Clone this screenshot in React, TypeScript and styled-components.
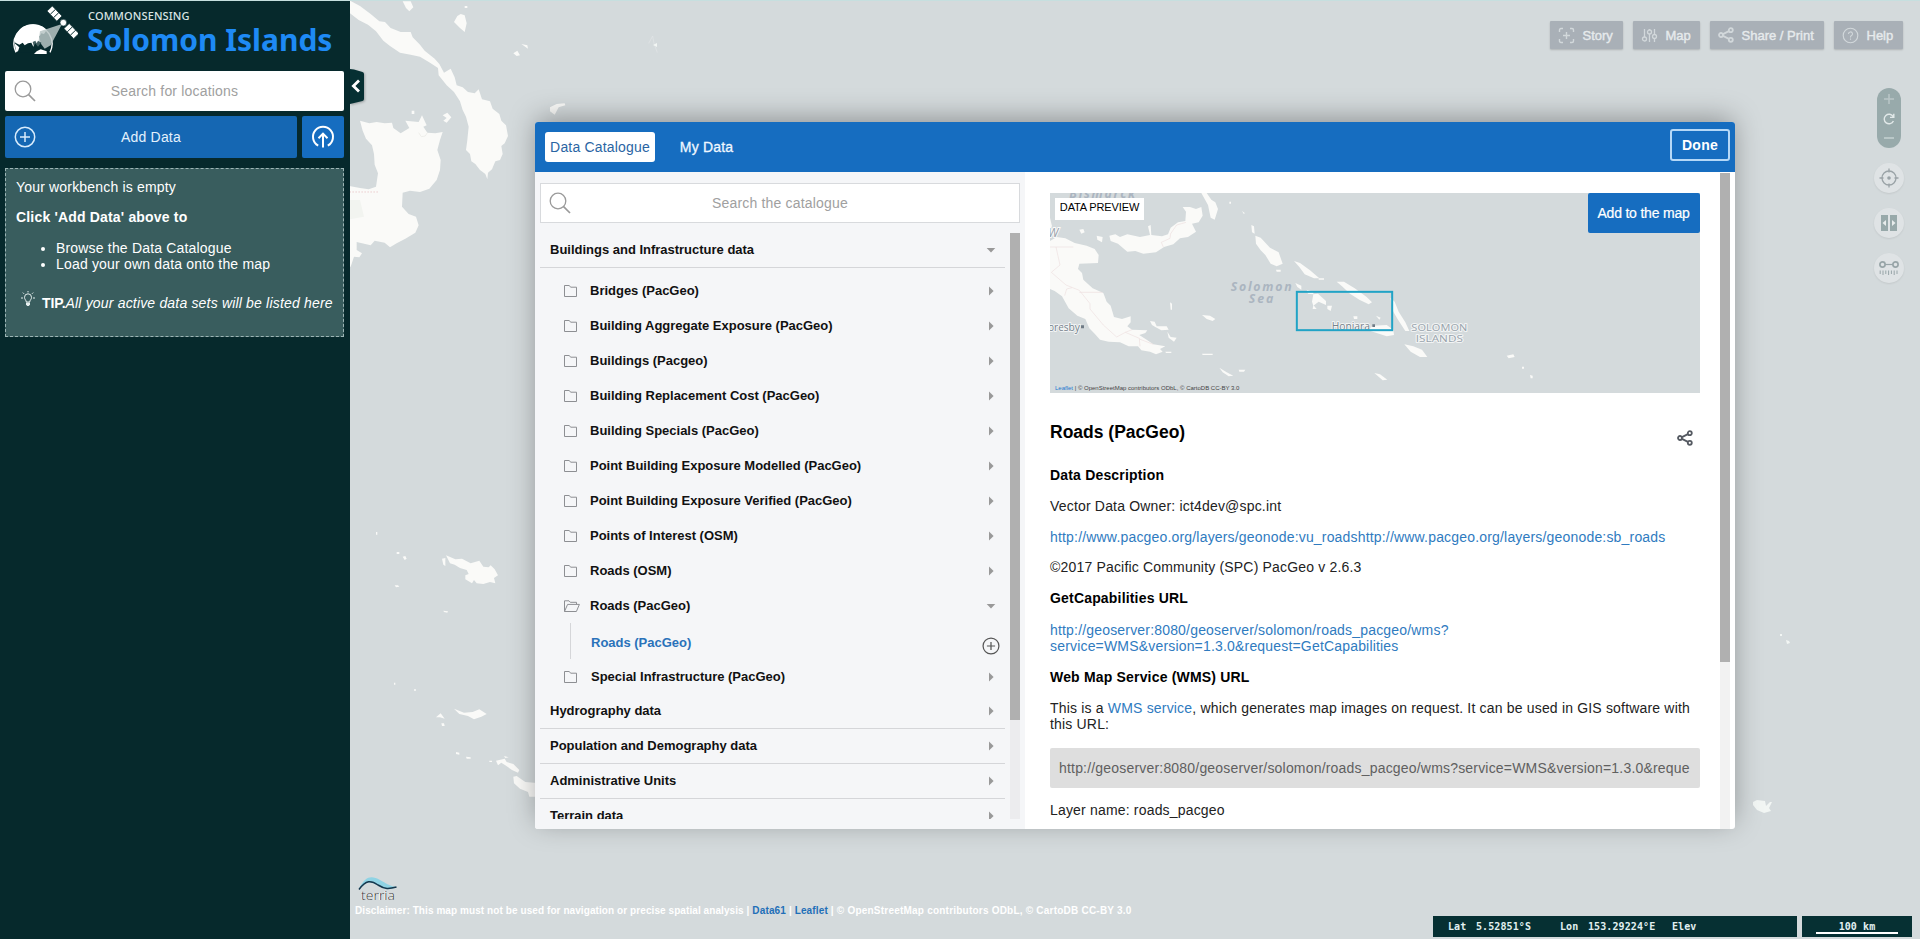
import React from 'react';
import styled, { createGlobalStyle, css } from 'styled-components';

const sans = '"Liberation Sans", Arial, sans-serif';
const blue = '#166dc0';

const GlobalStyle = createGlobalStyle`
  * { box-sizing: border-box; }
  html, body { margin: 0; padding: 0; }
  body { font-family: ${sans}; font-size: 14px; letter-spacing: 0.18px; line-height: 16px; color: #000; overflow: hidden; }
  p, ul, h3, h4 { margin: 0; }
  a { color: #2f7bbf; text-decoration: none; }
  button { font-family: inherit; letter-spacing: inherit; border: 0; margin: 0; cursor: pointer; }
`;

const Page = styled.div`
  position: relative;
  display: flex;
  width: 100%;
  height: 939px;
  background: #d4dadc;
  border-top: 1px solid #c6dfdf;
  overflow: hidden;
`;

/* ---------- sidebar ---------- */

const Sidebar = styled.aside`
  position: relative;
  display: flex;
  flex-direction: column;
  width: 350px;
  height: 100%;
  padding: 0 6px 0 5px;
  background: #06292c;
  color: #fff;
`;

const Brand = styled.header`
  display: flex;
  height: 70px;
  padding: 5px 0 0 7px;
  gap: 10px;
`;

const BrandText = styled.div`
  display: flex;
  flex-direction: column;
  font-family: "Noto Sans", "Open Sans", sans-serif;
  padding-top: 2px;
`;

const BrandOver = styled.span`
  font-size: 11px;
  font-weight: 500;
  letter-spacing: 0.12px;
  line-height: 16px;
  color: #d9e4e4;
`;

const BrandName = styled.span`
  font-size: 30px;
  font-weight: 700;
  letter-spacing: 0;
  line-height: 34px;
  margin-top: -1px;
  margin-left: -1px;
  color: #1e8af5;
`;

const SearchField = styled.div<{ $bordered?: boolean }>`
  display: flex;
  align-items: center;
  flex: none;
  height: 40px;
  padding: 0 9px;
  background: #fff;
  border-radius: 2px;
  ${p => p.$bordered && css`border: 1px solid #d8dadd; border-radius: 0; padding: 0 8px;`}
`;

const Placeholder = styled.span`
  flex: 1;
  padding-right: 22px;
  text-align: center;
  color: #a0a0a0;
`;

const ActionRow = styled.div`
  display: flex;
  gap: 5px;
  margin-top: 5px;
`;

const AddButton = styled.button`
  display: flex;
  align-items: center;
  width: 292px;
  height: 42px;
  padding: 0 9px;
  background: #1567b3;
  border-radius: 2px;
  color: #e3f1fd;
  font-size: 14px;
  span { flex: 1; text-align: center; padding-right: 22px; }
`;

const UploadButton = styled.button`
  display: flex;
  align-items: center;
  justify-content: center;
  width: 42px;
  height: 42px;
  padding: 0;
  background: ${blue};
  border-radius: 2px;
`;

const Workbench = styled.section`
  margin-top: 10px;
  height: 169px;
  padding: 10px;
  background: #395d5e;
  border: 1px dashed #9db5b5;
`;

const EmptyTitle = styled.p`margin-bottom: 14px;`;
const EmptyLead = styled(EmptyTitle)`font-weight: 700; margin-bottom: 15px;`;
const Steps = styled.ul`padding-left: 40px; line-height: 16px;`;
const Tip = styled.p`
  display: flex;
  align-items: center;
  margin-top: 23px;
  white-space: nowrap;
  svg { margin: -8px 6px 0 4px; }
  strong { letter-spacing: -0.1px; }
`;

const Collapse = styled.button`
  position: absolute;
  left: 350px;
  top: 68px;
  width: 14px;
  height: 35px;
  padding: 0;
  background: none;
  filter: drop-shadow(1px 1px 1px rgba(0,0,0,.25));
  svg { display: block; }
`;

/* ---------- map ---------- */

const MapArea = styled.main`
  position: relative;
  display: flex;
  flex: 1;
  flex-direction: column;
`;

const LandLayer = styled.svg`
  position: absolute;
  left: 0;
  top: -1px;
`;

const Toolbar = styled.nav`
  display: flex;
  justify-content: flex-end;
  gap: 10px;
  padding: 20px 17px 0 0;
`;

const ToolButton = styled.button<{ $w: number }>`
  display: flex;
  align-items: center;
  width: ${p => p.$w}px;
  height: 28px;
  padding: 0 0 0 8px;
  gap: 7.5px;
  background: #a9b0b7;
  border-radius: 1px;
  box-shadow: 0 1px 2px rgba(0,0,0,.18);
  color: #e6eaec;
  font-size: 13px;
  letter-spacing: 0;
  -webkit-text-stroke: 0.4px #e6eaec;
  white-space: nowrap;
`;

const NavColumn = styled.div`
  display: flex;
  flex-direction: column;
  align-items: center;
  align-self: flex-end;
  width: 30px;
  margin: 39px 16px 0 0;
`;

const ZoomPill = styled.div`
  display: flex;
  flex-direction: column;
  align-items: center;
  justify-content: space-between;
  width: 24px;
  height: 60px;
  padding: 6px 0 5px;
  margin-bottom: 15px;
  background: #98aaab;
  border-radius: 12px;
`;

const RoundTool = styled.div`
  display: flex;
  align-items: center;
  justify-content: center;
  width: 30px;
  height: 30px;
  margin-bottom: 15px;
  background: #dfe3e5;
  border-radius: 50%;
  box-shadow: 0 1px 2px rgba(0,0,0,.08);
`;

const MapFooter = styled.footer`
  display: flex;
  justify-content: space-between;
  margin-top: auto;
  height: 62px;
`;

const Credits = styled.div`
  padding-left: 5px;
  color: #fff;
  font-size: 10px;
  font-weight: 700;
  letter-spacing: 0.08px;
  line-height: 12px;
  white-space: nowrap;
  a { color: #1f6fb8; letter-spacing: 0.15px; }
  svg { display: block; margin: 0 0 1px 3px; }
`;

const Attribution = styled.span`letter-spacing: 0.22px;`;

const Readouts = styled.div`
  display: flex;
  align-items: flex-start;
  gap: 5px;
  padding: 39px 8px 0 0;
  font-family: "DejaVu Sans Mono", "Liberation Mono", monospace;
  font-size: 10px;
  font-weight: 700;
  letter-spacing: 0.1px;
  line-height: 21px;
  color: #e2f1f1;
`;

const Coordinates = styled.div`
  display: flex;
  width: 364px;
  height: 21px;
  padding-left: 15px;
  background: #063033;
  white-space: pre;
`;

const Reading = styled.span<{ $w: number }>`width: ${p => p.$w}px;`;

const Scale = styled.div`
  width: 110px;
  height: 21px;
  background: #063033;
  text-align: center;
  &::after { content: ""; display: block; width: 82px; height: 2px; margin: -5px auto 0 14px; background: #fff; }
`;

/* ---------- catalogue window ---------- */

const Dialog = styled.div`
  position: absolute;
  left: 535px;
  top: 121px;
  display: flex;
  flex-direction: column;
  width: 1200px;
  height: 707px;
  background: #fff;
  border-radius: 3px;
  box-shadow: 0 -5px 28px -2px rgba(0,0,0,.34);
  overflow: hidden;
`;

const DialogHeader = styled.div`
  display: flex;
  align-items: center;
  flex: none;
  height: 50px;
  padding: 0 5px 0 10px;
  background: ${blue};
`;

const Tab = styled.button<{ $active?: boolean }>`
  height: 30px;
  padding: 0;
  width: ${p => (p.$active ? 110 : 103)}px;
  border-radius: 3px;
  background: ${p => (p.$active ? '#fff' : 'transparent')};
  color: ${p => (p.$active ? '#2a65a3' : '#eef7ff')};
  font-size: 14px;
  -webkit-text-stroke: ${p => (p.$active ? '0' : '0.3px #eef7ff')};
`;

const DoneButton = styled.button`
  width: 60px;
  height: 32px;
  margin: -5px 0 0 auto;
  padding: 0;
  background: transparent;
  border: 2px solid #b5d8f7;
  border-radius: 3px;
  color: #fff;
  font-size: 14px;
  font-weight: 700;
  letter-spacing: 0.3px;
`;

const DialogBody = styled.div`
  display: flex;
  flex: 1;
  min-height: 0;
`;

const CataloguePane = styled.div`
  display: flex;
  flex-direction: column;
  width: 490px;
  padding: 11px 5px 10px;
  background: #f5f6f8;
`;

const ListViewport = styled.div`
  display: flex;
  justify-content: space-between;
  flex: 1;
  min-height: 0;
  margin-top: 10px;
  overflow: hidden;
`;

const Tree = styled.div`
  width: 465px;
  font-size: 13px;
  font-weight: 700;
  letter-spacing: -0.01px;
  color: #111;
`;

const GroupRow = styled.div`
  display: flex;
  align-items: center;
  justify-content: space-between;
  height: 35px;
  padding: 0 9px 0 10px;
  border-bottom: 1px solid #d5d6d9;
`;

const Children = styled.div`padding: 5px 0 0;`;

const FolderRow = styled.div<{ $shift?: boolean }>`
  display: flex;
  align-items: center;
  height: 35px;
  padding: 0 9px 0 23px;
  span { flex: 1; padding-left: ${p => (p.$shift ? 11 : 10)}px; }
`;

const LeafRow = styled.div`
  display: flex;
  align-items: center;
  height: 36px;
  margin-left: 30px;
  padding: 4px 5px 0 20px;
  border-left: 1px solid #d5d6d9;
  color: #2a72ba;
  span { flex: 1; }
  svg { margin-top: 6px; }
`;

const Track = styled.div<{ $bg: string; $thumb: number }>`
  flex: none;
  width: 10px;
  background: ${p => p.$bg};
  &::before { content: ""; display: block; height: ${p => p.$thumb}px; background: #b0b0b0; }
`;

const DetailPane = styled.div`
  display: flex;
  flex: 1;
  justify-content: space-between;
  padding: 1px 5px 0 25px;
`;

const Details = styled.article`
  width: 650px;
  padding-top: 20px;
  color: #222;
`;

const Preview = styled.div`
  position: relative;
  height: 200px;
  background: #d4dadc;
  overflow: hidden;
  & > svg { display: block; }
`;

const PreviewTag = styled.span`
  position: absolute;
  left: 5px;
  top: 5px;
  width: 89px;
  height: 22px;
  background: #fff;
  font-size: 11px;
  letter-spacing: -0.13px;
  line-height: 18px;
  text-align: center;
  color: #000;
`;

const AddToMap = styled.button`
  position: absolute;
  right: 0;
  top: 0;
  width: 112px;
  height: 40px;
  padding: 0 1px 1px 0;
  background: ${blue};
  border-radius: 2px;
  color: #fff;
  font-size: 14px;
  letter-spacing: -0.2px;
  -webkit-text-stroke: 0.2px #fff;
`;

const PreviewCredit = styled.div`
  position: absolute;
  left: 5px;
  bottom: 1px;
  font-size: 6px;
  letter-spacing: 0;
  line-height: 8px;
  color: #444;
  a { color: #1f78d0; }
`;

const TitleRow = styled.div`
  display: flex;
  justify-content: space-between;
  align-items: flex-start;
  height: 74px;
  padding: 29px 7px 0 0;
  svg { margin-top: 8px; }
`;

const Title = styled.h3`
  font-size: 17.5px;
  line-height: 20px;
  letter-spacing: 0;
  color: #000;
`;

const Heading = styled.h4`
  font-size: 14px;
  line-height: 16px;
  margin-bottom: 14.8px;
  color: #000;
`;

const CapabilitiesHeading = styled(Heading)`margin-bottom: 16px;`;

const Para = styled.p`margin-bottom: 14.8px;`;

const UrlBox = styled.div`
  height: 40px;
  margin: 16px 0 14px;
  padding: 0 9px;
  background: #dedede;
  border-radius: 2px;
  letter-spacing: 0.19px;
  line-height: 40px;
  color: #606060;
  white-space: nowrap;
  overflow: hidden;
`;

/* ---------- icons ---------- */

const Magnifier = () => (
  <svg width="22" height="22" viewBox="0 0 22 22" fill="none" stroke="#9a9a9a" strokeWidth="1.3">
    <circle cx="9" cy="9" r="7.8" />
    <path d="M14.6 14.6 L21 21" strokeWidth="1.7" />
  </svg>
);

const PlusCircle = ({ size, color }: { size: number; color: string }) => (
  <svg width={size} height={size} viewBox="0 0 22 22" fill="none" stroke={color} strokeWidth="1.5">
    <circle cx="11" cy="11" r="9.7" />
    <path d="M11 6 V16 M6 11 H16" />
  </svg>
);

const Caret = ({ open }: { open?: boolean }) => (
  <svg width="10" height="10" viewBox="0 0 10 10" fill="#999">
    {open ? <path d="M0.7 3 H9.3 L5 7.4 Z" /> : <path d="M3 0.6 V9.4 L7.6 5 Z" />}
  </svg>
);

const Folder = ({ open }: { open?: boolean }) => (
  <svg width="17" height="14" viewBox="0 0 17 14" fill="none" stroke="#8d8f93" strokeWidth="1">
    {open ? (
      <path d="M1.5 12.5 V1.8 H6 L7.3 3.3 H13.5 V5.3 M1.5 12.5 L4.6 5.4 H16.4 L13.4 12.5 Z" />
    ) : (
      <path d="M1.5 12.5 V1.5 H6.3 L7.6 3.2 H13.5 V12.5 Z" />
    )}
  </svg>
);

const ShareGlyph = ({ color, size }: { color: string; size: number }) => (
  <svg width={size} height={size} viewBox="0 0 16 16" fill="none" stroke={color} strokeWidth="1.8">
    <circle cx="3" cy="8" r="2" />
    <circle cx="12.8" cy="3.2" r="2" />
    <circle cx="12.8" cy="12.8" r="2" />
    <path d="M5 7.1 L10.9 4.1 M5 8.9 L10.9 11.9" />
  </svg>
);

const EarthLogo = () => (
  <svg width="66" height="52" viewBox="0 0 198 156">
    <path d="M12 139 A57 57 0 1 1 114 139" fill="#06292c" stroke="#fff" strokeWidth="4" />
    <path d="M7 104 A57 57 0 0 1 104 72 L96 84 L88 82 L82 92 L86 112 L78 122 L70 112 L64 122 L58 110 L48 112 L38 118 L32 110 L22 116 L10 110 Z" fill="#fff" />
    <path d="M74 136 L86 130 L104 136 L104 144 L66 144 Z" fill="#fff" />
    <path d="M8 112 L22 124 L18 136 L12 138 Z" fill="#fff" />
    <path d="M150 54 L84 76 L80 104 L98 128 L116 118 Z" fill="#b9c5c5" opacity="0.85" />
    <path d="M62 108 l8 -4 4 8 4 -8 10 6 -4 14 -10 4 -8 -6 Z" fill="#06292c" opacity="0.75" />
    <g fill="#fff" stroke="#06292c" strokeWidth="2">
      <g transform="translate(154 50) rotate(46)">
        <rect x="-59" y="-11" width="14" height="22" />
        <rect x="-45" y="-11" width="14" height="22" />
        <rect x="-31" y="-11" width="14" height="22" />
        <rect x="14" y="-11" width="14" height="22" />
        <rect x="28" y="-11" width="14" height="22" />
        <rect x="42" y="-11" width="14" height="22" />
      </g>
      <circle cx="154" cy="50" r="10" />
    </g>
  </svg>
);

const Bulb = () => (
  <svg width="16" height="16" viewBox="0 0 16 16" fill="none" stroke="#e6efef" strokeWidth="1">
    <path d="M6.3 11 C6.3 9.2 4.5 8.6 4.5 6.3 A3.5 3.5 0 0 1 11.5 6.3 C11.5 8.6 9.7 9.2 9.7 11 Z M1 7 H3 M13 7 H15 M2.8 1.6 L4 2.8 M13.2 1.6 L12 2.8 M8 0 V1.4" />
    <path d="M6 11.5 H10 V13.5 L8.8 15 H7.2 L6 13.5 Z" fill="#e6efef" stroke="none" />
  </svg>
);

const StoryGlyph = () => (
  <svg width="17" height="17" viewBox="0 0 17 17" fill="none" stroke="#d2d8db" strokeWidth="1.4">
    <path d="M1.5 5 V3 Q1.5 1.5 3 1.5 H5 M12 1.5 H14 Q15.5 1.5 15.5 3 V5 M15.5 12 V14 Q15.5 15.5 14 15.5 H12 M5 15.5 H3 Q1.5 15.5 1.5 14 V12 M8.5 5 V12 M5 8.5 H12" />
  </svg>
);

const SlidersGlyph = () => (
  <svg width="17" height="15" viewBox="0 0 17 15" fill="none" stroke="#d2d8db" strokeWidth="1.3">
    <path d="M3.5 1 V9 M8.5 6 V14 M13.5 1 V6.5 M13.5 10.5 V14 M8.5 1 V2" />
    <circle cx="3.5" cy="11" r="2" />
    <circle cx="8.5" cy="4" r="2" />
    <circle cx="13.5" cy="8.5" r="2" />
  </svg>
);

const HelpGlyph = () => (
  <svg width="17" height="17" viewBox="0 0 17 17" fill="none" stroke="#d2d8db" strokeWidth="1.1">
    <circle cx="8.5" cy="8.5" r="7.3" />
    <path d="M6.5 7 A2 2 0 1 1 9.2 8.8 Q8.5 9.2 8.5 10.4 M8.5 11.6 V12.8" />
  </svg>
);

const TerriaLogo = () => (
  <svg width="42" height="27" viewBox="0 0 42 27">
    <path d="M1 11.5 C8 -2 14 -1 22 3 C28 6 32 9.5 38.5 10 C31 14 26 12 21 9 C13 4 8 4 1 11.5Z" fill="#8fd3e4" />
    <path d="M1 12.5 C8 3 13 3 20 8 C27 12.5 31 12 38.5 10" fill="none" stroke="#15374d" strokeWidth="1.5" />
    <text x="2.4" y="23.4" fontFamily='"Open Sans", sans-serif' fontSize="12.5" fontWeight="400" fill="#fff" textLength="34" lengthAdjust="spacingAndGlyphs">terria</text>
    <text x="3" y="23" fontFamily='"Open Sans", sans-serif' fontSize="12.5" fontWeight="300" fill="#333" textLength="34" lengthAdjust="spacingAndGlyphs">terria</text>
  </svg>
);

/* ---------- map drawings ---------- */

const Land = () => (
  <LandLayer width="1920" height="939" viewBox="0 0 1920 939" fill="#fafaf8">
    <g transform="translate(340 0) scale(0.33333)">
      <path d="M30 2 L60 18 L92 42 L118 64 L135 66 L152 84 L182 96 L212 96 L218 112 L240 134 L254 152 L284 176 L298 192 L312 218 L332 206 L344 232 L350 256 L368 262 L384 276 L404 280 L416 268 L426 298 L450 304 L458 326 L478 342 L484 362 L498 376 L504 408 L494 430 L484 438 L488 462 L480 480 L466 484 L456 508 L444 518 L442 538 L436 522 L420 510 L406 492 L394 484 L390 462 L378 450 L382 420 L386 380 L378 350 L368 330 L360 304 L342 276 L320 256 L296 226 L294 204 L270 188 L240 170 L212 164 L180 158 L150 138 L130 122 L108 94 L84 74 L56 60 L30 40 Z" />
      <path d="M60 362 L88 370 L110 366 L134 370 L156 368 L160 384 L182 400 L208 384 L196 362 L236 366 L246 346 L260 376 L250 380 L262 398 L286 400 L308 396 L300 420 L292 450 L302 480 L300 510 L290 540 L268 566 L240 576 L210 572 L188 578 L186 620 L206 642 L228 650 L236 676 L226 698 L196 716 L170 730 L150 742 L134 728 L104 722 L92 736 L50 726 L50 750 L66 760 L58 772 L42 770 L32 800 L28 800 L28 558 L60 564 L86 568 L108 560 L114 520 L104 494 L102 462 L96 436 L78 416 L68 392 Z" />
      <path d="M188 4 L212 4 L220 22 L208 34 L198 24 Z M362 42 L374 46 L380 70 L374 96 L360 84 L342 66 L352 48 Z M520 160 L532 152 L540 166 L530 168 Z M544 132 L562 136 L564 146 Z M374 18 l8 0 0 6 -8 0Z M630 322 L650 312 L674 310 L676 316 L656 322 L644 344 L630 334 Z M308 346 L322 338 L334 352 L320 368 L310 362 L320 354 Z M215 332 h8 v10 h-8Z" />
      <path d="M262 398 L256 408 L244 410 L236 398" fill="none" stroke="#e8e8e4" strokeWidth="2" />
      <path d="M28 576 H118" stroke="#e9bcc0" strokeWidth="2" strokeDasharray="5 4" fill="none" />
      <path d="M30 600 L60 600 L72 650 L30 658 Z" fill="#f2f4f0" />
      <path d="M926 130 L938 108 L942 130 L952 158" fill="none" stroke="#e2e6e7" strokeWidth="2" />
    </g>
    <g transform="translate(340 500) scale(0.33333)">
      <path d="M306 176 L316 174 L316 198 L310 194 Z M318 166 L346 178 L366 176 L392 190 L418 182 L430 200 L446 202 L452 196 L464 208 L474 226 L462 234 L466 250 L450 246 L430 252 L410 250 L402 240 L396 250 L376 238 L376 226 L386 222 L380 210 L360 204 L344 194 L330 190 Z" />
      <path d="M342 626 L372 638 L398 636 L418 628 L440 642 L424 650 L402 658 L384 648 L358 642 Z M288 652 L302 640 L314 656 L300 652 Z M468 782 L494 776 L500 786 L520 792 L538 810 L534 818 L516 810 L496 796 L484 788 L474 796 Z M520 830 L530 828 L556 846 L600 850 L600 890 L568 890 L564 876 L540 866 L522 850 Z" />
      <path d="M188 170 l8 -2 4 8 -6 4Z M170 156 l8 0 0 6 -8 0Z M164 256 l10 0 4 4 -10 2Z M310 332 l14 2 -2 4 -10 -2Z M348 756 l10 2 0 6 -10 -2Z M378 770 l14 2 0 4 -12 0Z M304 670 l8 0 2 8 -8 0Z M492 768 l14 4 -10 2Z M448 782 h8 v4 h-8Z M108 96 h4 v8 h-4Z M222 568 h6 v4 h-6Z M162 548 h4 v6 h-4Z" />
    </g>
    <path d="M1753 802 L1757 800 L1765 801 L1766 806 L1770 802 L1772 802 L1769 808 L1771 811 L1764 813 L1757 810 L1753 805 Z M1786 640 l3 1 1 2 -3 1Z M1780 634 h2 v2 h-2Z M653 45 l4 -2 0 4Z" fill="#f2f6f4" />
  </LandLayer>
);

const labelFont = '"Open Sans", sans-serif';

const PreviewMap = () => (
  <svg width="650" height="200" viewBox="30 24 1950 600" fill="#fafaf8">
    <path d="M30 98 L36 124 L30 130 Z M30 168 L50 156 L76 160 L104 174 L140 182 L164 192 L176 210 L174 234 L118 236 L114 252 L126 264 L130 284 L158 310 L190 324 L200 350 L212 362 L222 396 L246 402 L272 394 L272 412 L262 424 L276 434 L322 436 L316 444 L298 450 L320 464 L340 478 L376 484 L360 492 L368 500 L348 508 L330 500 L304 496 L294 484 L266 484 L240 472 L206 470 L180 464 L164 446 L148 430 L136 402 L112 392 L86 370 L66 334 L44 318 L30 312 Z" />
    <path d="M208 152 L226 148 L240 156 L262 148 L300 156 L330 150 L324 124 L332 120 L334 150 L366 154 L384 148 L392 128 L414 112 L436 108 L438 80 L428 66 L450 66 L468 72 L484 66 L488 92 L476 112 L456 116 L468 140 L444 156 L420 160 L400 178 L372 186 L348 202 L310 206 L286 198 L262 200 L234 176 L212 168 Z" />
    <path d="M484 24 L500 24 L514 44 L526 52 L534 72 L524 104 L512 98 L504 60 Z M118 134 L130 132 L134 142 L124 146 Z M170 152 L188 156 L186 172 L172 164 Z M634 120 L642 124 L644 146 L636 142 Z M646 152 L662 158 L690 188 L716 202 L728 236 L710 244 L692 236 L676 210 L662 196 L648 176 Z M708 254 h14 v6 h-12Z M762 228 L780 234 L810 256 L838 280 L822 280 L794 268 L778 246 Z" />
    <path d="M766 294 L784 302 L784 314 L772 306 Z M800 314 L820 320 L820 328 L804 326 Z M820 328 L834 326 L858 348 L858 360 L836 350 L820 362 L816 350 Z M820 360 L830 372 L818 372 Z M862 362 L876 362 L872 378 L862 372 Z M890 290 L912 290 L944 310 L980 336 L996 352 L986 358 L958 344 L930 326 L906 304 Z M836 280 h16 v4 h-16Z" />
    <path d="M1051 338 L1064 350 L1076 380 L1096 412 L1108 438 L1096 438 L1074 404 L1060 380 Z M984 436 L998 422 L1040 420 L1060 434 L1062 450 L1040 454 L1010 444 Z M1093 478 L1120 484 L1146 494 L1162 516 L1140 516 L1112 500 Z M1003 564 L1020 568 L1042 584 L1028 586 Z M1400 512 L1420 508 L1424 516 L1406 520 Z M1446 545 h6 v6 h-6Z M1470 570 l8 2 0 8 -6 0Z M1008 392 l14 6 -4 6Z M940 394 h12 v8 h-10Z" />
    <path d="M330 408 L344 410 L350 424 L380 424 L386 434 L364 436 L346 426 L336 420 Z M382 440 L392 456 L410 458 L402 470 L386 458 Z M486 390 L510 392 L526 402 L518 408 L500 402 Z M390 352 l6 4 0 18 -4 0Z M538 548 L560 562 L580 572 L566 574 L548 562 Z M596 554 h20 l-4 6 h-14Z M486 506 h32 v4 h-30Z M376 500 h18 v4 h-16Z M606 78 l8 6 -2 4Z M568 50 h5 v6 h-5Z" />
    <g fill="none" stroke="#ecdede" strokeWidth="1.8">
      <path d="M30 186 H100 M48 186 L60 240 L34 262 L78 300 L118 316 L150 356 L150 372 L190 420 L230 456 L256 442 L298 460 L300 484 M74 332 L80 312 L96 308 M118 322 H188 M256 442 L276 434 M438 112 L410 120 L392 146 L390 160 L364 172 L370 186 M298 462 L340 478" />
    </g>
    <g fill="#abb5c0" fontFamily={labelFont} fontStyle="italic" fontWeight="700">
      <text x="88" y="38" fontSize="37" textLength="197">Bismarck</text>
      <text x="572" y="318" fontSize="37" textLength="183">Solomon</text>
      <text x="626" y="355" fontSize="37" textLength="74">Sea</text>
      <text x="24" y="155" fontSize="36" fill="#97a0a8" fontWeight="400" stroke="#fafafa" strokeWidth="6" paintOrder="stroke">W</text>
    </g>
    <g fontFamily={labelFont} fill="#77838d" stroke="#f2f4f4" strokeWidth="6" paintOrder="stroke" strokeLinejoin="round">
      <text x="24" y="437" fontSize="31" textLength="96">oresby</text>
      <text x="875" y="434" fontSize="31" textLength="115">Honiara</text>
      <text x="1114" y="438" fontSize="29" fill="#98a3ac" textLength="168" lengthAdjust="spacingAndGlyphs">SOLOMON</text>
      <text x="1127" y="470" fontSize="29" fill="#98a3ac" textLength="142" lengthAdjust="spacingAndGlyphs">ISLANDS</text>
    </g>
    <path d="M123 421 h9 v9 h-9Z M997 418 h8 v8 h-8Z" fill="#6f7b85" />
    <rect x="770.5" y="320.5" width="286" height="115" fill="none" stroke="#21a3c6" strokeWidth="6" />
  </svg>
);

/* ---------- content ---------- */

const folders = [
  'Bridges (PacGeo)',
  'Building Aggregate Exposure (PacGeo)',
  'Buildings (Pacgeo)',
  'Building Replacement Cost (PacGeo)',
  'Building Specials (PacGeo)',
  'Point Building Exposure Modelled (PacGeo)',
  'Point Building Exposure Verified (PacGeo)',
  'Points of Interest (OSM)',
  'Roads (OSM)',
];

const groups = ['Hydrography data', 'Population and Demography data', 'Administrative Units', 'Terrain data'];

export default function App() {
  return (
    <Page>
      <GlobalStyle />
      <Land />
      <Sidebar>
        <Brand>
          <EarthLogo />
          <BrandText>
            <BrandOver>COMMONSENSING</BrandOver>
            <BrandName>Solomon Islands</BrandName>
          </BrandText>
        </Brand>
        <SearchField>
          <Magnifier />
          <Placeholder>Search for locations</Placeholder>
        </SearchField>
        <ActionRow>
          <AddButton>
            <PlusCircle size={22} color="#d9ecfc" />
            <span>Add Data</span>
          </AddButton>
          <UploadButton aria-label="Upload">
            <svg width="24" height="24" viewBox="0 0 24 24" fill="none" stroke="#fff" strokeWidth="2">
              <path d="M7.2 20.6 A10 10 0 1 1 16.8 20.6 M12 22.5 V9 M7.5 13.2 L12 8.6 L16.5 13.2" />
            </svg>
          </UploadButton>
        </ActionRow>
        <Workbench>
          <EmptyTitle>Your workbench is empty</EmptyTitle>
          <EmptyLead>Click 'Add Data' above to</EmptyLead>
          <Steps>
            <li>Browse the Data Catalogue</li>
            <li>Load your own data onto the map</li>
          </Steps>
          <Tip>
            <Bulb />
            <strong>TIP.</strong>
            <em>All your active data sets will be listed here</em>
          </Tip>
        </Workbench>
        <Collapse aria-label="Hide panel">
          <svg width="14" height="35" viewBox="0 0 14 35">
            <path d="M0 0 L4 0.6 L12.5 3 Q14 3.5 14 5 V30 Q14 31.5 12.5 32 L0 35 Z" fill="#063033" />
            <path d="M9 11.5 L3.4 17 L9 22.5" fill="none" stroke="#fff" strokeWidth="2.8" />
          </svg>
        </Collapse>
      </Sidebar>

      <MapArea>
        <Toolbar>
          <ToolButton $w={73}><StoryGlyph />Story</ToolButton>
          <ToolButton $w={67}><SlidersGlyph />Map</ToolButton>
          <ToolButton $w={114}><ShareGlyph color="#d2d8db" size={16} />Share / Print</ToolButton>
          <ToolButton $w={69}><HelpGlyph />Help</ToolButton>
        </Toolbar>
        <NavColumn>
          <ZoomPill>
            <svg width="10" height="10" viewBox="0 0 10 10" stroke="#b9c6c7" strokeWidth="1.5"><path d="M5 0 V10 M0 5 H10" /></svg>
            <svg width="12" height="12" viewBox="0 0 12 12" fill="none" stroke="#e2e9e9" strokeWidth="1.4">
              <path d="M10.4 8 A4.8 4.8 0 1 1 10.2 3.6 M10.8 0.8 V4.4 H7" />
            </svg>
            <svg width="10" height="10" viewBox="0 0 10 10" stroke="#c3d0d0" strokeWidth="1.6"><path d="M0 5 H10" /></svg>
          </ZoomPill>
          <RoundTool>
            <svg width="20" height="20" viewBox="0 0 20 20" fill="none" stroke="#9aa3a7" strokeWidth="1.3">
              <circle cx="10" cy="10" r="7" />
              <circle cx="10" cy="10" r="1.8" fill="#9aa3a7" stroke="none" />
              <path d="M10 0.5 V4.5 M10 15.5 V19.5 M0.5 10 H4.5 M15.5 10 H19.5" />
            </svg>
          </RoundTool>
          <RoundTool>
            <svg width="16" height="16" viewBox="0 0 16 16">
              <path d="M0 0 H7 V16 H0 Z M9 0 H16 V16 H9 Z" fill="#98a9aa" />
              <path d="M5 5 V11 L1.5 8 Z M11 5 V11 L14.5 8 Z" fill="#e8ecec" />
            </svg>
          </RoundTool>
          <RoundTool>
            <svg width="20" height="16" viewBox="0 0 20 16" fill="none" stroke="#98a5a8">
              <circle cx="3.5" cy="4.5" r="2.6" strokeWidth="1.7" />
              <circle cx="16.5" cy="4.5" r="2.6" strokeWidth="1.7" />
              <path d="M6 4.5 H14" strokeWidth="1.2" />
              <path d="M1.2 10.5 V14 M4 10.5 V15 M6.8 10.5 V14 M9.6 10.5 V15 M12.4 10.5 V14 M15.2 10.5 V15 M18 10.5 V14" />
            </svg>
          </RoundTool>
        </NavColumn>
        <MapFooter>
          <Credits>
            <TerriaLogo />
            Disclaimer: This map must not be used for navigation or precise spatial analysis | <a>Data61</a> | <a>Leaflet</a>{' '}
            <Attribution>| © OpenStreetMap contributors ODbL, © CartoDB CC-BY 3.0</Attribution>
          </Credits>
          <Readouts>
            <Coordinates>
              <Reading $w={28}>Lat</Reading>
              <Reading $w={84}>5.52851°S</Reading>
              <Reading $w={28}>Lon</Reading>
              <Reading $w={84}>153.29224°E</Reading>
              <Reading $w={40}>Elev</Reading>
            </Coordinates>
            <Scale>100 km</Scale>
          </Readouts>
        </MapFooter>
      </MapArea>

      <Dialog>
        <DialogHeader>
          <Tab $active>Data Catalogue</Tab>
          <Tab>My Data</Tab>
          <DoneButton>Done</DoneButton>
        </DialogHeader>
        <DialogBody>
          <CataloguePane>
            <SearchField $bordered>
              <Magnifier />
              <Placeholder>Search the catalogue</Placeholder>
            </SearchField>
            <ListViewport>
              <Tree>
                <GroupRow>Buildings and Infrastructure data<Caret open /></GroupRow>
                <Children>
                  {folders.map(name => (
                    <FolderRow key={name}><Folder /><span>{name}</span><Caret /></FolderRow>
                  ))}
                  <FolderRow><Folder open /><span>Roads (PacGeo)</span><Caret open /></FolderRow>
                  <LeafRow><span>Roads (PacGeo)</span><PlusCircle size={18} color="#555" /></LeafRow>
                  <FolderRow $shift><Folder /><span>Special Infrastructure (PacGeo)</span><Caret /></FolderRow>
                </Children>
                {groups.map(name => (
                  <GroupRow key={name}>{name}<Caret /></GroupRow>
                ))}
              </Tree>
              <Track $bg="#ececee" $thumb={487} />
            </ListViewport>
          </CataloguePane>
          <DetailPane>
            <Details>
              <Preview>
                <PreviewMap />
                <PreviewTag>DATA PREVIEW</PreviewTag>
                <AddToMap>Add to the map</AddToMap>
                <PreviewCredit><a>Leaflet</a> | © OpenStreetMap contributors ODbL, © CartoDB CC-BY 3.0</PreviewCredit>
              </Preview>
              <TitleRow>
                <Title>Roads (PacGeo)</Title>
                <ShareGlyph color="#555a62" size={16} />
              </TitleRow>
              <Heading>Data Description</Heading>
              <Para>Vector Data Owner: ict4dev@spc.int</Para>
              <Para><a>http://www.pacgeo.org/layers/geonode:vu_roadshttp://www.pacgeo.org/layers/geonode:sb_roads</a></Para>
              <Para>©2017 Pacific Community (SPC) PacGeo v 2.6.3</Para>
              <CapabilitiesHeading>GetCapabilities URL</CapabilitiesHeading>
              <Para>
                <a>http://geoserver:8080/geoserver/solomon/roads_pacgeo/wms?<br />service=WMS&amp;version=1.3.0&amp;request=GetCapabilities</a>
              </Para>
              <Heading>Web Map Service (WMS) URL</Heading>
              <Para>
                This is a <a>WMS service</a>, which generates map images on request. It can be used in GIS software with<br />this URL:
              </Para>
              <UrlBox>http://geoserver:8080/geoserver/solomon/roads_pacgeo/wms?service=WMS&amp;version=1.3.0&amp;reque</UrlBox>
              <Para>Layer name: roads_pacgeo</Para>
            </Details>
            <Track $bg="#f2f2f2" $thumb={489} />
          </DetailPane>
        </DialogBody>
      </Dialog>
    </Page>
  );
}
